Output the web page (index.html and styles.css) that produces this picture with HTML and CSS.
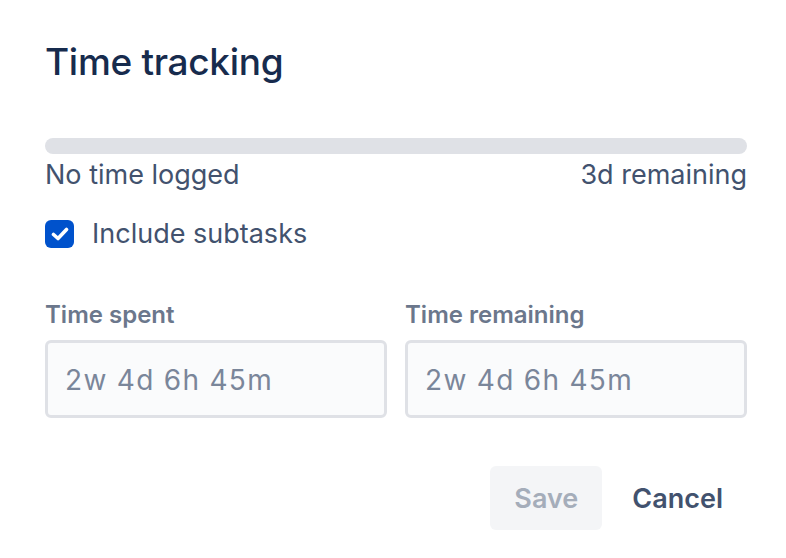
FILE: index.html
```html
<!DOCTYPE html>
<html lang="en">
  <head>
    <meta charset="UTF-8" />
    <meta name="viewport" content="width=device-width, initial-scale=1.0" />
    <title>Time tracking</title>
    <link rel="stylesheet" href="styles.css">
  </head>

  <body>
    <div id="dialog">
      <h2 class="title">Time tracking</h2>

      <div class="progress"><div class="progress-fill"></div></div>
      <div class="progress-text">
        <span>No time logged</span>
        <span>3d remaining</span>
      </div>

      <label class="check">
        <span class="box">
          <svg width="18" height="14" viewBox="0 0 18 14">
            <path d="M2.5 7.5 L7 11.5 L15.5 2.5" fill="none" stroke="white" stroke-width="3.6" stroke-linecap="round" stroke-linejoin="round" />
          </svg>
        </span>
        Include subtasks
      </label>

      <div class="fields">
        <label class="field">
          <span class="field-label">Time spent</span>
          <input type="text" placeholder="2w 4d 6h 45m" />
        </label>
        <label class="field">
          <span class="field-label">Time remaining</span>
          <input type="text" placeholder="2w 4d 6h 45m" />
        </label>
      </div>

      <div class="actions">
        <button class="save" disabled>Save</button>
        <button class="cancel">Cancel</button>
      </div>
    </div>
  </body>
</html>
```

FILE: styles.css
```css
body {
  margin: 0;
  background: white;
  font-family: Inter, "Noto Sans", sans-serif;
  color: #42526e;
}

#dialog {
  padding: 38px 39px 0 45px;
}

.title {
  margin: 0;
  font-size: 37px;
  font-weight: 500;
  color: #172b4d;
  line-height: 48px;
  letter-spacing: -0.3px;
}

.progress {
  margin-top: 52px;
  height: 16px;
  border-radius: 8px;
  background-color: #dfe1e6;
}

.progress-text {
  display: flex;
  justify-content: space-between;
  font-size: 27px;
  line-height: 40px;
  margin-top: 1px;
}

.check {
  display: flex;
  align-items: center;
  gap: 18px;
  margin-top: 21px;
  font-size: 27px;
  line-height: 36px;
}

.box {
  display: flex;
  justify-content: center;
  align-items: center;
  width: 29px;
  height: 28px;
  border-radius: 6px;
  background-color: #0052cc;
}

.fields {
  display: grid;
  grid-template-columns: 1fr 1fr;
  gap: 18px;
  margin-top: 49px;
}

.field {
  display: flex;
  flex-direction: column;
  gap: 11px;
}

.field-label {
  font-size: 24px;
  font-weight: 600;
  color: #6b778c;
  line-height: 28px;
}

input {
  box-sizing: border-box;
  height: 78px;
  width: 100%;
  padding: 2px 17px 0;
  border: 3px solid #dfe1e6;
  border-radius: 6px;
  background-color: #fafbfc;
  font-family: inherit;
  font-size: 28px;
  letter-spacing: 1.3px;
}

input::placeholder {
  color: #7a869a;
}

.actions {
  display: flex;
  justify-content: flex-end;
  gap: 6px;
  margin-top: 48px;
}

button {
  height: 64px;
  padding: 0 24px;
  border: none;
  border-radius: 6px;
  font-family: inherit;
  font-size: 27px;
  font-weight: 600;
  background: none;
}

.save {
  width: 112px;
  background-color: #f4f5f7;
  color: #a5adba;
}

.cancel {
  color: #42526e;
}
```
